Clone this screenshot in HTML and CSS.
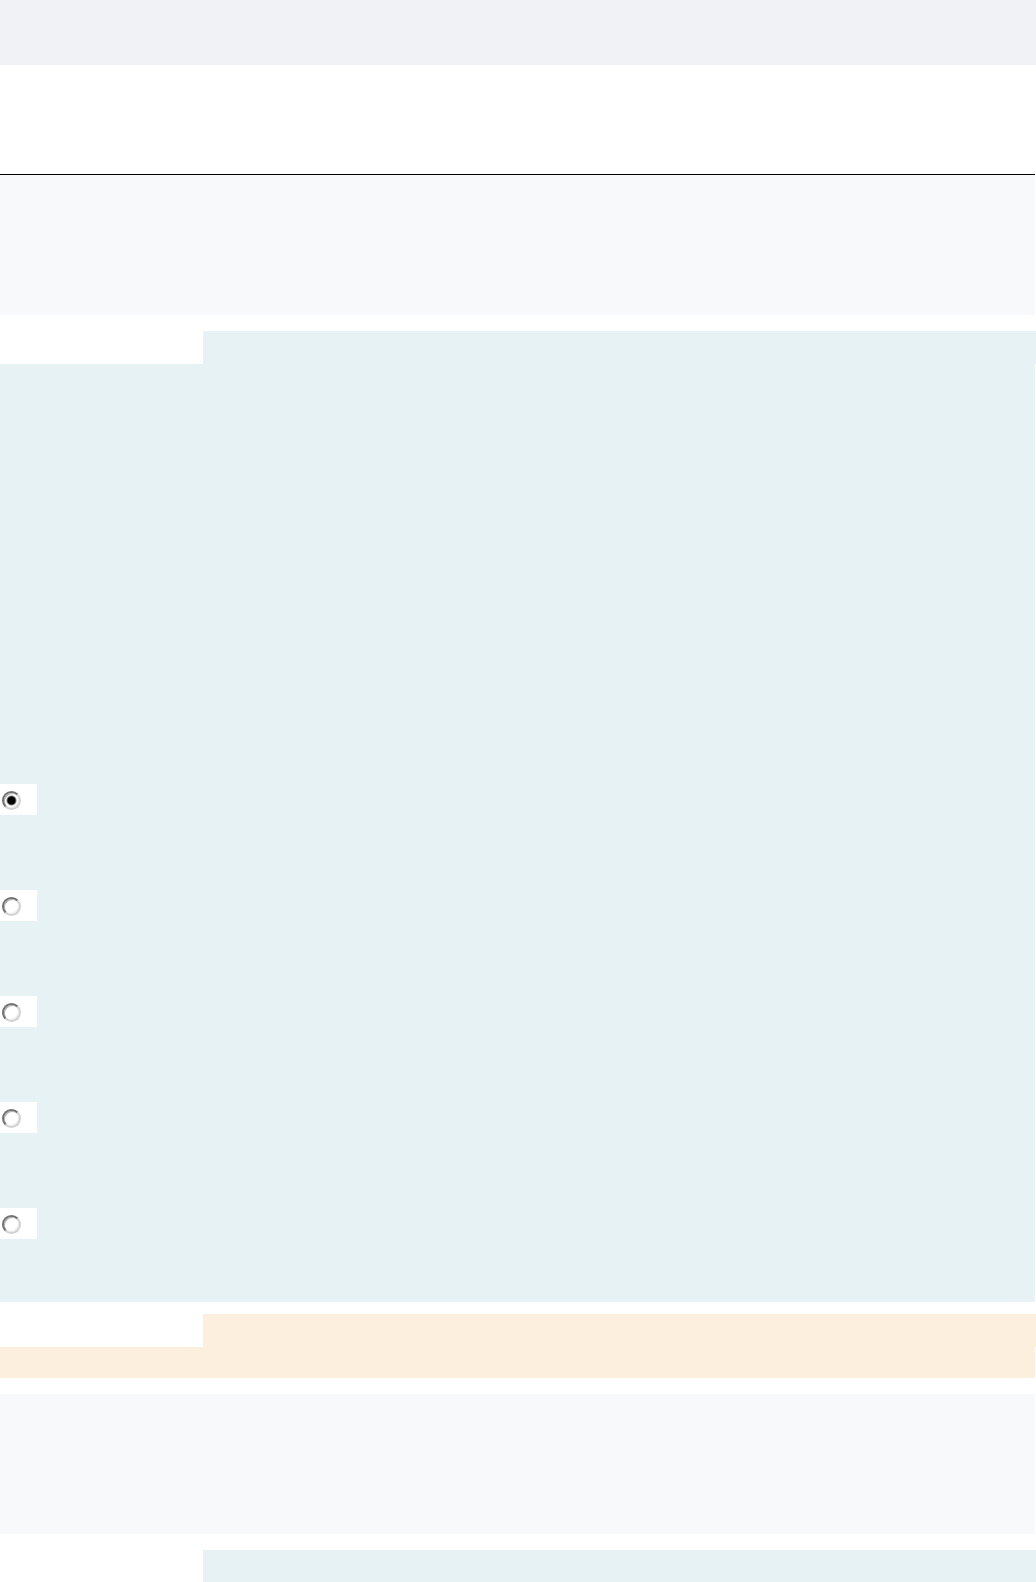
FILE: index.html
```html
<!DOCTYPE html>
<html>
  <head>
    <meta name="viewport" content="width=device-width, initial-scale=1" />
    <link rel="stylesheet" href="styles.css">
  </head>
  <body>
    <div class="topbar"></div>
    <div class="intro"></div>
    <hr class="rule" />

    <div class="panel"></div>

    <div class="section info">
      <div class="tab"></div>
      <div class="body">
        <form class="choices">
          <label class="choice"><input type="radio" name="pick" checked /></label>
          <label class="choice"><input type="radio" name="pick" /></label>
          <label class="choice"><input type="radio" name="pick" /></label>
          <label class="choice"><input type="radio" name="pick" /></label>
          <label class="choice"><input type="radio" name="pick" /></label>
        </form>
      </div>
    </div>

    <div class="section warn">
      <div class="tab"></div>
      <div class="body short"></div>
    </div>

    <div class="panel"></div>

    <div class="section info last">
      <div class="tab"></div>
    </div>
  </body>
</html>
```

FILE: styles.css
```css
* {
  box-sizing: border-box;
}

body {
  margin: 0;
  width: 1036px;
  font-family: "Liberation Sans", Arial, sans-serif;
  background: #ffffff;
}

.topbar {
  height: 65px;
  background-color: #f0f2f6;
}

.intro {
  height: 109px;
}

.rule {
  margin: 0;
  width: 1035px;
  height: 1px;
  border: none;
  background-color: #000000;
}

.panel {
  width: 1035px;
  height: 140px;
  background-color: #f8f9fa;
}

.section {
  margin-top: 16px;
}

.section.warn {
  margin-top: 12px;
  margin-bottom: 16px;
}

.tab {
  margin-left: 203px;
  height: 33px;
}

.body {
  width: 1035px;
}

.info .tab,
.info .body {
  background-color: #e6f2f4;
}

.warn .tab,
.warn .body {
  background-color: #fcefdd;
}

.body.short {
  height: 31px;
}

.choices {
  display: flex;
  flex-direction: column;
  gap: 75px;
  padding: 420px 0 63px 0;
  margin: 0;
}

.choice {
  display: flex;
  align-items: center;
  width: 37px;
  height: 31px;
  padding-left: 2px;
  background-color: #ffffff;
}

.choice input {
  appearance: none;
  -webkit-appearance: none;
  margin: 1px 0 0 0;
  width: 19px;
  height: 19px;
  border-radius: 50%;
  border: 2px solid;
  border-color: #727272 #d2d2d2 #d2d2d2 #727272;
  background: #ffffff;
  box-shadow: inset 1px 1px 0 #b8b8b8, inset -1px -1px 0 #ececec;
}

.choice input:checked {
  background: radial-gradient(circle, #000000 0 3.5px, #7a7a7a 4.5px, #ffffff 5.5px);
}

.last .tab {
  height: 40px;
}
```
